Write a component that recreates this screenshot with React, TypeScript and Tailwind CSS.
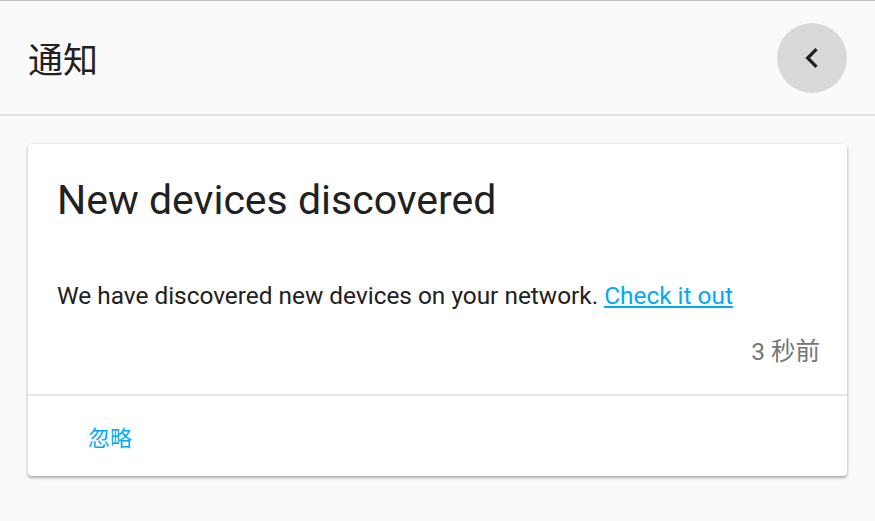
import { FC } from 'react';

const ChevronLeft: FC = () => (
  <svg width="40" height="40" viewBox="0 0 24 24" fill="none">
    <path d="M15.41 7.41 14 6l-6 6 6 6 1.41-1.41L10.83 12z" fill="#212121" />
  </svg>
);

export default function App() {
  return (
    <div className="w-[875px] h-[521px] bg-[#fafafa] border-t border-[#bdbdbd] font-['Roboto','Noto_Sans_CJK_SC',sans-serif] overflow-hidden">
      <header className="h-[115px] flex items-center justify-between pl-[28px] pr-[28px] border-b-2 border-[#e0e0e0]">
        <h1 className="text-[35px] text-[#212121] font-['Noto_Sans_CJK_SC',sans-serif] leading-none">通知</h1>
        <button className="w-[70px] h-[70px] rounded-full bg-[#d9d9d9] flex items-center justify-center">
          <ChevronLeft />
        </button>
      </header>

      <main className="px-[28px] pt-[28px]">
        <div className="bg-white rounded-[4px] shadow-[0_2px_3px_rgba(0,0,0,0.3),0_0_4px_rgba(0,0,0,0.08)]">
          <div className="px-[29px] pt-[30px] pb-[26px]">
            <h2 className="text-[41px] leading-[52px] text-[#212121]">New devices discovered</h2>
            <p className="mt-[54px] text-[24.4px] leading-[32px] text-[#212121]">
              We have discovered new devices on your network.{' '}
              <a href="#" className="text-[#03a9f4] underline">
                Check it out
              </a>
            </p>
            <div className="mt-[24px] -mr-[2px] text-right text-[24.5px] leading-[32px] text-[#757575]">3 秒前</div>
          </div>
          <div className="border-t-2 border-[#e6e6e6] h-[82px] flex items-center pl-[60px]">
            <button className="text-[22px] text-[#03a9f4] font-['Noto_Sans_CJK_SC',sans-serif]">忽略</button>
          </div>
        </div>
      </main>
    </div>
  );
}
